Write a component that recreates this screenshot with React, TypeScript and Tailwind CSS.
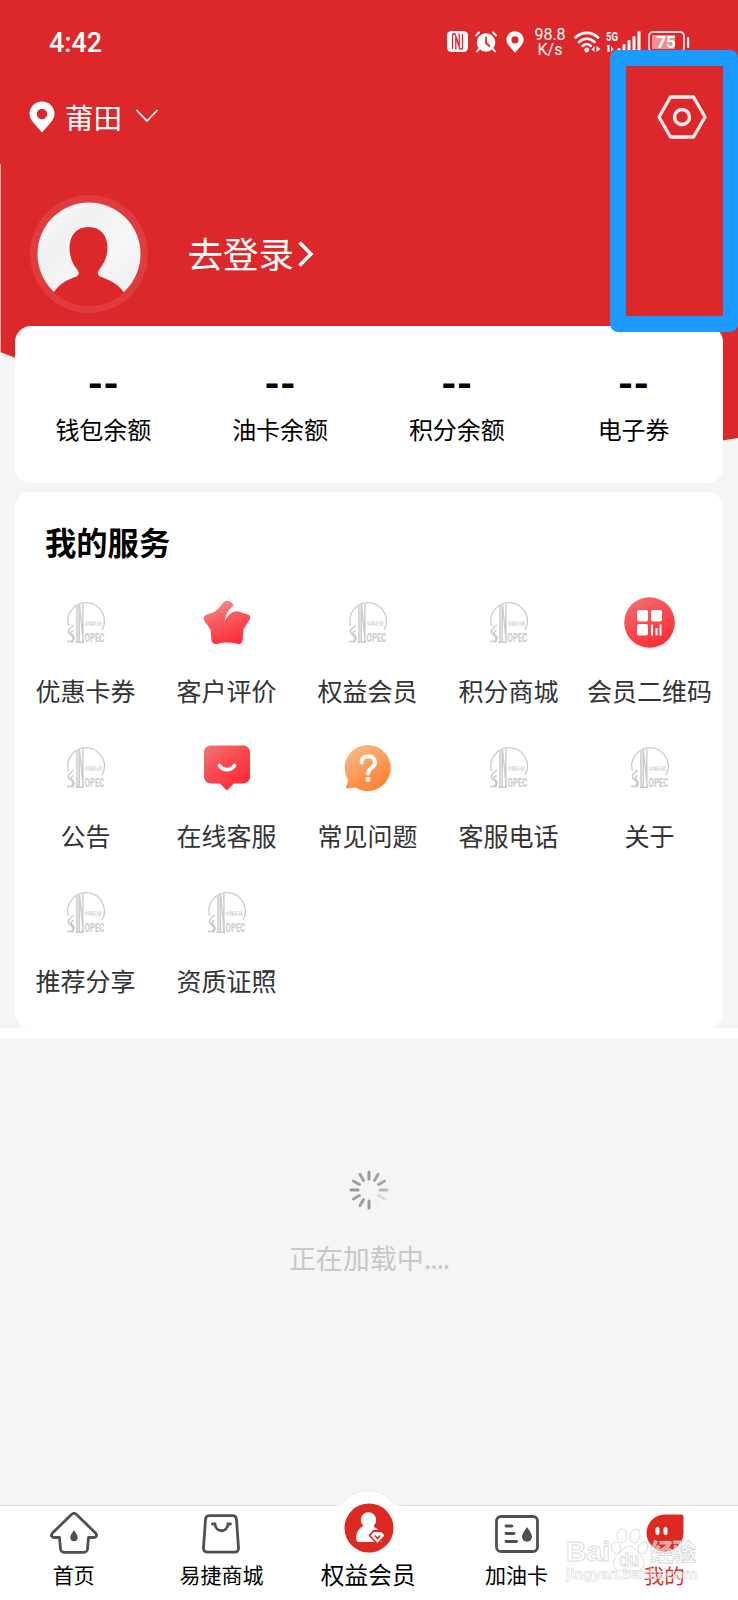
import React from 'react';

type IconProps = { className?: string };

const PinIcon: React.FC<IconProps> = ({ className }) => (
  <svg viewBox="0 0 26 32" className={className} fill="currentColor">
    <path
      fillRule="evenodd"
      d="M13 0.5C6 0.5 0.5 6 0.5 12.8c0 3.6 1.700 6.400 4 8.900L13 31.500l8.500-9.800c2.300-2.500 4-5.300 4-8.900C25.500 6 20 0.500 13 0.500zm0 7.300a5.200 5.200 0 1 1 0 10.400a5.200 5.200 0 0 1 0-10.400z"
    />
  </svg>
);

const NfcIcon: React.FC = () => (
  <svg viewBox="0 0 21 21" className="w-[21px] h-[21px]">
    <rect width="21" height="21" rx="4.500" fill="#fff" />
    <path d="M5.500 3v15M8.800 18.500V6.500M12.200 2.500v12M15.500 3v15" fill="none" stroke="#dc282b" strokeWidth="1.300" />
    <path d="M5.500 3h2.500L12.200 14.500M15.500 18h-2.500L8.800 6.500" fill="none" stroke="#dc282b" strokeWidth="1.300" />
  </svg>
);

const AlarmIcon: React.FC = () => (
  <svg viewBox="0 0 24 22" className="w-6 h-[22px]" fill="none" stroke="#fff" strokeLinecap="round">
    <circle cx="12" cy="11.500" r="9.300" fill="#fff" stroke="none" />
    <path d="M2 4.500L5 1.500M22 4.500L19 1.500M5 18l-2 2.500M19 18l2 2.500" strokeWidth="2" />
    <path d="M12 6.500v5.500l3.500 3" stroke="#dc282b" strokeWidth="1.800" />
  </svg>
);

const WifiIcon: React.FC = () => (
  <svg viewBox="0 0 27 22" className="w-[27px] h-[22px]" fill="none" stroke="#fff">
    <path d="M1.500 6.500C8 0.300 17.500 0.300 24 6.500" strokeWidth="2.600" strokeLinecap="round" />
    <path d="M5 11C9.500 6.700 16 6.700 20.500 11" strokeWidth="2.600" strokeLinecap="round" />
    <path d="M8.500 15C11 12.700 14.500 12.700 17 15" strokeWidth="2.500" strokeLinecap="round" />
    <circle cx="12.700" cy="19" r="2.400" fill="#fff" stroke="none" />
    <path d="M20.500 15v6l-3-2.500zM22.500 21v-6l4 3z" fill="#fff" stroke="none" />
  </svg>
);

const SignalIcon: React.FC = () => (
  <svg viewBox="0 0 35 22" className="w-[35px] h-[22px] overflow-visible" fill="#fff">
    <text x="0" y="9.500" fontSize="12.500" fontWeight="700" textLength="12" lengthAdjust="spacingAndGlyphs" fontFamily="Roboto, sans-serif">5G</text>
    <path d="M0.500 15l3-1.500V21H1.500v-5zM5 15l2.500 3L5 21z" />
    <rect x="11.500" y="17" width="3" height="5" rx="1" />
    <rect x="16.500" y="13" width="3" height="9" rx="1" />
    <rect x="21.500" y="9" width="3" height="13" rx="1" />
    <rect x="26.500" y="5" width="3" height="17" rx="1" />
    <rect x="31.500" y="0" width="3" height="22" rx="1" />
  </svg>
);

const BatteryIcon: React.FC = () => (
  <svg viewBox="0 0 42 22" className="w-[42px] h-[22px]">
    <rect x="1" y="1" width="35" height="20" rx="4" fill="none" stroke="#fbdcdc" strokeWidth="1.800" />
    <rect x="4" y="4" width="23" height="14" rx="1" fill="#ee8f91" />
    <rect x="39" y="6" width="2.200" height="11" rx="1" fill="#fff" />
    <text x="18" y="17" textAnchor="middle" fill="#fff" fontSize="17" fontWeight="700" fontFamily="Roboto, sans-serif">75</text>
  </svg>
);

const AvatarIcon: React.FC = () => (
  <svg viewBox="0 0 118 118" className="w-[118px] h-[118px]">
    <defs>
      <linearGradient id="avatar" x1="0" y1="0" x2="1" y2="1">
        <stop offset="0" stopColor="#fff" />
        <stop offset="0.300" stopColor="#f0f0f0" />
        <stop offset="0.600" stopColor="#f7f7f7" />
        <stop offset="1" stopColor="#ececec" />
      </linearGradient>
      <clipPath id="avatarClip">
        <circle cx="59" cy="59" r="52.300" />
      </clipPath>
    </defs>
    <circle cx="59" cy="59" r="59" fill="#e03c3f" />
    <circle cx="59" cy="59" r="51.500" fill="url(#avatar)" />
    <path
      clipPath="url(#avatarClip)"
      fill="#dc282b"
      d="M58.500 32C46 32 39.500 41 39.500 53c0 9 3.500 17 8 22c2 2.500 1.500 5-1 6.500C37 85 29 89 24 97L10 118h98L93.500 97C88.500 89 79 85 70 81.500c-2.500-1.500-3-4-1-6.500C73.500 69.500 77.500 62 77.500 53C77.500 41 71 32 58.500 32z"
    />
  </svg>
);

// Grey placeholder shown until the real service icon arrives
const SinopecIcon: React.FC = () => (
  <svg viewBox="0 0 40 42" className="w-10 h-[42px] overflow-visible" fill="none" stroke="#cbcbcb">
    <path d="M2.500 24A18.300 18.300 0 1 1 36 28" strokeWidth="1.300" />
    <path d="M11 40.500V4M13.200 40.500V2.500M9.500 40.200h8.500" strokeWidth="1.500" />
    <path d="M13.500 2.500L17.300 40M16.900 2v38.500" strokeWidth="1.400" />
    <path d="M8 23C3 26.500 0.500 29.500 4 32.500c3.500 2.500 4.500 4 1 7H1M7.500 28.500C4 30.500 4.500 31.500 6.500 33c2.500 2.500 2 5-0.500 7.500" strokeWidth="1.500" />
    <text x="18.500" y="40" fontSize="12" fontWeight="700" textLength="20" lengthAdjust="spacingAndGlyphs" fill="#cbcbcb" stroke="none" fontFamily="Roboto, sans-serif">OPEC</text>
    <text x="18.500" y="22.500" fontSize="4.500" textLength="17.500" fill="#bdbdbd" stroke="none" fontFamily="'Noto Sans CJK SC', sans-serif">中国石化</text>
  </svg>
);

const StarIcon: React.FC = () => (
  <svg viewBox="0 0 48 46" className="w-12 h-[46px]">
    <defs>
      <linearGradient id="star" x1="0.200" y1="0" x2="0.600" y2="1">
        <stop offset="0" stopColor="#f09a96" />
        <stop offset="0.400" stopColor="#f75f62" />
        <stop offset="1" stopColor="#ff2c38" />
      </linearGradient>
    </defs>
    <path
      fill="url(#star)"
      d="M19.500 3.500c2.500-3.500 6-3.500 9-1L31 5.200C26.500 8.500 22.300 14 21.700 21.500C25 15 29.500 10.500 35.500 11.500l9.500 3c2.500 1 3 3.500 1.500 5.500l-6 9L39.500 40.500c-0.500 3-2.500 4-5 3.200C28 42 20.500 42 14.500 43.700C11.500 44.500 9 43.500 8.500 40.500L7.500 29.500L1.500 21C0 18.500 0.500 16 3 15l8-3C14 10.500 17 7 19.500 3.500z"
    />
  </svg>
);

const QrIcon: React.FC = () => (
  <svg viewBox="0 0 51 51" className="w-[51px] h-[51px]">
    <defs>
      <linearGradient id="qr" x1="0.200" y1="0" x2="0.700" y2="1">
        <stop offset="0" stopColor="#f36b6c" />
        <stop offset="1" stopColor="#fd2b36" />
      </linearGradient>
    </defs>
    <circle cx="25.500" cy="25.500" r="25.300" fill="url(#qr)" />
    <g fill="#fff">
      <rect x="13" y="13" width="11" height="11.500" rx="2" />
      <rect x="27" y="13" width="11" height="11.500" rx="2" />
      <rect x="13" y="27" width="11" height="11.500" rx="2" />
      <rect x="27" y="27.500" width="2" height="11" />
      <rect x="31.500" y="31" width="2" height="7.500" />
      <rect x="35.500" y="27.500" width="2" height="11" />
    </g>
  </svg>
);

const ChatIcon: React.FC = () => (
  <svg viewBox="0 0 48 46" className="w-12 h-[46px]">
    <defs>
      <linearGradient id="chat" x1="0" y1="0.100" x2="0.700" y2="1">
        <stop offset="0" stopColor="#f07072" />
        <stop offset="0.450" stopColor="#fa4b50" />
        <stop offset="1" stopColor="#ff2a36" />
      </linearGradient>
    </defs>
    <path fill="url(#chat)" d="M7.500 0.500h33a6.500 6.500 0 0 1 6.500 6.500V32a6.500 6.500 0 0 1-6.500 6.500H31L24 45.500L17 38.500H7.500A6.500 6.500 0 0 1 1 32V7A6.500 6.500 0 0 1 7.500 0.500z" />
    <path d="M16.500 20.500c3.500 5.500 11.500 5.500 15 0" fill="none" stroke="#fff" strokeWidth="3.600" strokeLinecap="round" />
  </svg>
);

const QuestionIcon: React.FC = () => (
  <svg viewBox="0 0 48 48" className="w-12 h-12">
    <defs>
      <linearGradient id="question" x1="0.100" y1="0" x2="0.700" y2="1">
        <stop offset="0" stopColor="#f9bd88" />
        <stop offset="1" stopColor="#fd7f33" />
      </linearGradient>
    </defs>
    <path fill="url(#question)" d="M24 1a23 23 0 1 1-12.500 42.500L3 44.500C1.500 44.500 1.500 42 3 40.500L4 36A23 23 0 0 1 24 1z" />
    <path d="M17.500 18.500c0-8.500 13.500-8.500 13.500 0c0 5.500-7 5-7 11" fill="none" stroke="#fff" strokeWidth="4" strokeLinecap="round" />
    <circle cx="24" cy="35.500" r="2.400" fill="#fff" />
  </svg>
);

const HomeIcon: React.FC = () => (
  <svg viewBox="0 0 48 42" className="w-12 h-[42px]" fill="none" stroke="#505050" strokeWidth="2.800" strokeLinejoin="round">
    <path d="M21.500 2.500c1.500-1.300 3.500-1.300 5 0L45.500 21c2 2 1 4.500-1.500 4.500H38.500L37.500 37a3.500 3.500 0 0 1-3.500 3.300H14A3.500 3.500 0 0 1 10.500 37L9.500 25.500H4C1.500 25.500 0.500 23 2.500 21z" />
    <path d="M24 18c2.500 4 3.700 5.500 3.700 7.500a3.700 3.700 0 0 1-7.400 0C20.300 23.500 21.500 22 24 18z" fill="#505050" stroke="none" />
  </svg>
);

const BagIcon: React.FC = () => (
  <svg viewBox="0 0 38 40" className="w-[38px] h-10" fill="none" stroke="#505050" strokeWidth="2.800">
    <path d="M7.500 1.700h23a4 4 0 0 1 4 3.600l2 28.700a3.800 3.800 0 0 1-3.800 4.200H5.300A3.800 3.800 0 0 1 1.500 34l2-28.700A4 4 0 0 1 7.500 1.700z" />
    <path d="M10.500 10H13c0.500 9 12.500 9 13 0h2.500" strokeLinecap="round" strokeWidth="2.800" />
  </svg>
);

const MemberIcon: React.FC = () => (
  <svg viewBox="0 0 50 50" className="w-[50px] h-[50px]">
    <circle cx="25" cy="25" r="24.500" fill="#dc2a22" />
    <circle cx="24.500" cy="17" r="7.700" fill="#fff" />
    <path d="M19.500 21h10.500v3c5 2 7.500 7 7.500 15H15.500c-3 0-3.500-2-3.300-5C12.500 28.500 15 25 19.500 23z" fill="#fff" />
    <path d="M29.500 28h8l4 4.500L33.500 41l-8-8.500z" fill="#fff" stroke="#dc2a22" strokeWidth="1.800" strokeLinejoin="round" />
    <path d="M31 32.500l2.500 3l2.500-3" fill="none" stroke="#dc2a22" strokeWidth="1.600" />
  </svg>
);

const CardIcon: React.FC = () => (
  <svg viewBox="0 0 44 38" className="w-11 h-[38px]" fill="none" stroke="#505050" strokeLinecap="round">
    <rect x="1.500" y="1.500" width="41" height="35" rx="4.500" strokeWidth="2.800" />
    <path d="M11 11h6M11 18.500h8M11 26.500h10.500" strokeWidth="2.800" />
    <path d="M32 12c3.500 5 5 7.500 5 9.800a5 5 0 0 1-10 0C27 19.500 28.500 17 32 12z" fill="#505050" stroke="none" />
  </svg>
);

const MineIcon: React.FC = () => (
  <svg viewBox="0 0 38 38" className="w-[38px] h-[38px]">
    <path d="M18.500 0.500H35a2.500 2.500 0 0 1 2.500 2.500V19A18.500 18.500 0 1 1 18.500 0.500z" fill="#dc2a22" />
    <rect x="9.500" y="13" width="4" height="8" rx="2" fill="#fff" />
    <rect x="17.500" y="13" width="4" height="8" rx="2" fill="#fff" />
  </svg>
);

const spokes = [
  '#9a9a9a', '#a3a3a3', '#a8a8a8', '#b8b8b8', '#dddddd', '#f1f1f1',
  '#9a9a9a', '#a0a0a0', '#a0a0a0', '#9a9a9a', '#a0a0a0', '#a0a0a0',
];

const Spinner: React.FC = () => (
  <svg viewBox="-20 -20 40 40" className="w-10 h-10">
    {spokes.map((color, i) => (
      <line key={i} x1="0" y1="-11" x2="0" y2="-18" stroke={color} strokeWidth="3" strokeLinecap="round" transform={`rotate(${i * 30})`} />
    ))}
  </svg>
);

const balances = ['钱包余额', '油卡余额', '积分余额', '电子券'];

const services = [
  { name: '优惠卡券', icon: <SinopecIcon /> },
  { name: '客户评价', icon: <StarIcon /> },
  { name: '权益会员', icon: <SinopecIcon /> },
  { name: '积分商城', icon: <SinopecIcon /> },
  { name: '会员二维码', icon: <QrIcon /> },
  { name: '公告', icon: <SinopecIcon /> },
  { name: '在线客服', icon: <ChatIcon /> },
  { name: '常见问题', icon: <QuestionIcon /> },
  { name: '客服电话', icon: <SinopecIcon /> },
  { name: '关于', icon: <SinopecIcon /> },
  { name: '推荐分享', icon: <SinopecIcon /> },
  { name: '资质证照', icon: <SinopecIcon /> },
];

const tabs = [
  { name: '首页', icon: <HomeIcon />, iconStyle: 'pt-[2px]', style: 'text-[21px] text-black' },
  { name: '易捷商城', icon: <BagIcon />, iconStyle: 'pt-[3px]', style: 'text-[21px] text-black' },
  { name: '权益会员', icon: <MemberIcon />, iconStyle: 'pb-[8px]', style: 'text-[23.7px] text-black pr-[1.5px]' },
  { name: '加油卡', icon: <CardIcon />, iconStyle: 'pt-[3px]', style: 'text-[21px] text-black' },
  { name: '我的', icon: <MineIcon />, iconStyle: 'pt-[1px] pl-[2px]', style: 'text-[20.5px] text-[#dc2a22]' },
];

const StatusBar: React.FC = () => (
  <div className="flex items-start justify-between h-[82px] pt-[30px] pl-[49px] pr-[48px]">
    <div className="text-[27px] leading-[27px] font-medium font-[Roboto,sans-serif]">4:42</div>
    <div className="flex items-start pt-[1px]">
      <NfcIcon />
      <div className="ml-[6px]"><AlarmIcon /></div>
      <PinIcon className="w-[18px] h-[22px] ml-[8px]" />
      <div className="w-[32px] ml-[10px] -mt-[3px] text-center text-[16px] leading-[14.5px] font-[Roboto,sans-serif]">
        <div>98.8</div>
        <div>K/s</div>
      </div>
      <div className="ml-[8px]"><WifiIcon /></div>
      <div className="ml-[5px]"><SignalIcon /></div>
      <div className="ml-[7px]"><BatteryIcon /></div>
    </div>
  </div>
);

const Header: React.FC = () => (
  <header className="text-white">
    <StatusBar />
    <div className="flex items-center justify-between h-[68px] pt-[1px] pl-[29px] pr-[31px]">
      <div className="flex items-center">
        <PinIcon className="w-[26px] h-8" />
        <span className="ml-[10px] text-[28.5px] leading-[32px]">莆田</span>
        <svg viewBox="0 0 24 14" className="w-6 h-[14px] ml-[13px] -mt-[2px]" fill="none" stroke="currentColor" strokeWidth="1.800">
          <path d="M1.500 1L12 12L22.500 1" />
        </svg>
      </div>
      <svg viewBox="0 0 50 44" className="w-[50px] h-11" fill="none" stroke="#fdeceb" strokeLinejoin="round">
        <path d="M13.500 2h23L48 22L36.500 42h-23L2 22z" strokeWidth="3.300" />
        <circle cx="25" cy="22" r="7.500" strokeWidth="3.500" />
      </svg>
    </div>
    <div className="flex items-center h-[175.5px] pt-[33px] pl-[29.5px]">
      <AvatarIcon />
      <span className="ml-[40px] -mt-[2px] text-[35.5px] leading-[40px]">去登录</span>
      <svg viewBox="0 0 17 28" className="w-[17px] h-7 ml-[3px]" fill="none" stroke="currentColor" strokeWidth="3.500">
        <path d="M2.500 2.500L14 14L2.500 25.500" />
      </svg>
    </div>
  </header>
);

const Balances: React.FC = () => (
  <section className="flex h-[157.5px] mx-[15px] pr-[1px] pt-[39px] rounded-2xl bg-white">
    {balances.map((name) => (
      <div key={name} className="flex-1 flex flex-col items-center">
        <span className="text-[40px] leading-[40px] font-bold font-[Roboto,sans-serif]">--</span>
        <span className="mt-[6px] text-[24px] leading-[36px]">{name}</span>
      </div>
    ))}
  </section>
);

const Services: React.FC = () => (
  <section className="h-[536px] mt-[9px] mx-[15px] pt-[28.5px] pr-[3px] rounded-2xl bg-white">
    <h2 className="pl-[30px] text-[31.3px] leading-[42px] font-bold">我的服务</h2>
    <div className="grid grid-cols-5 mt-[33px]">
      {services.map((service) => (
        <div key={service.name} className="flex flex-col items-center h-[145px]">
          <div className="flex items-center justify-center h-[54px]">{service.icon}</div>
          <span className="mt-[22px] text-[25px] leading-[36px] text-[#333] whitespace-nowrap">{service.name}</span>
        </div>
      ))}
    </div>
  </section>
);

const TabBar: React.FC = () => (
  <nav className="relative flex h-[95px] border-t border-[#e2e2e2] bg-white">
    {/* raised bump behind the middle tab */}
    <svg viewBox="0 0 64 18" className="absolute left-[336px] -top-[16px] w-16 h-[18px]">
      <path d="M0 17C4 16 6 12 10 9C22 -2 42 -2 54 9C58 12 60 16 64 17z" fill="#fff" stroke="#ececec" />
      <path d="M0 15.500h64v2.500H0z" fill="#fff" />
    </svg>
    {tabs.map((tab) => (
      <div key={tab.name} className="relative flex-1 flex flex-col items-center">
        <div className={`flex items-center justify-center h-[54px] -mt-[1px] ${tab.iconStyle}`}>{tab.icon}</div>
        <span className={`flex items-center h-[32px] whitespace-nowrap ${tab.style}`}>{tab.name}</span>
      </div>
    ))}
  </nav>
);

const Watermark: React.FC = () => (
  <svg viewBox="0 0 136 70" className="absolute left-[565px] top-[1516px] w-[136px] h-[70px]" fill="#fff" fillOpacity="0.550" stroke="#cfcfcf" strokeOpacity="0.800" strokeWidth="0.900">
    <g fontFamily="'Liberation Sans', 'Noto Sans CJK SC', sans-serif" fontWeight="700">
      <text x="1" y="45" fontSize="28" textLength="44" lengthAdjust="spacingAndGlyphs">Bai</text>
      <ellipse cx="51" cy="32" rx="4.500" ry="6" transform="rotate(-15 51 32)" />
      <ellipse cx="57" cy="20" rx="5" ry="7" />
      <ellipse cx="70" cy="20" rx="5" ry="7" transform="rotate(12 70 20)" />
      <ellipse cx="78" cy="32" rx="4.500" ry="6" transform="rotate(25 78 32)" />
      <path d="M64 30c5 0 7 5 11 9c6 5 6 15-3 16c-4 0-5-1-8-1s-5 1-9 1c-9-1-8-12-2-16C57 35 59 30 64 30z" />
      <text x="54" y="50" fontSize="18" textLength="20" lengthAdjust="spacingAndGlyphs">du</text>
      <text x="85" y="45" fontSize="23.500" textLength="46" fontFamily="'Noto Sans CJK SC', sans-serif">经验</text>
      <text x="1" y="63" fontSize="15" textLength="131" lengthAdjust="spacingAndGlyphs" strokeWidth="0.600">jingyan.baidu.com</text>
    </g>
  </svg>
);

const App: React.FC = () => {
  return (
    <div className="relative flex flex-col w-[738px] h-[1600px] overflow-hidden bg-[#f5f5f5] text-black font-['Noto_Sans_CJK_SC',sans-serif]">
      <svg viewBox="0 0 738 445" className="absolute left-0 top-0 w-[738px] h-[445px]">
        <path d="M0 0H738V438Q380 500 0 352z" fill="#dc282b" />
        <path d="M0.500 164V352" stroke="#e9a9a9" />
      </svg>
      <div className="relative flex flex-col flex-1">
        <Header />
        <Balances />
        <Services />
        <div className="h-[10px] bg-white" />
        <div className="flex flex-col items-center flex-1 pt-[132px]">
          <Spinner />
          <p className="mt-[28px] text-[27px] leading-[40px] text-[#c8c8c8]">
            正在加载中<span className="tracking-[-1.2px]">....</span>
          </p>
        </div>
      </div>
      <TabBar />
      <Watermark />
      {/* highlight around the settings button */}
      <div className="absolute left-[610px] top-[50px] w-[128px] h-[282px] border-16 border-r-15 border-[#1b9bff] rounded-lg" />
    </div>
  );
};

export default App;
